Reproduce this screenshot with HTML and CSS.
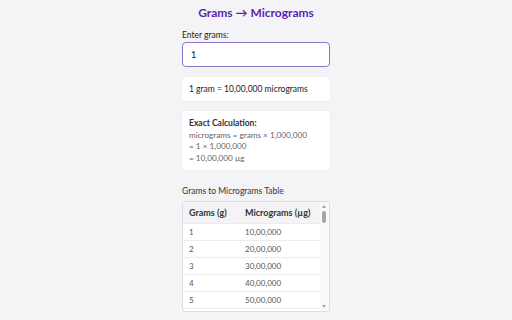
FILE: index.html
```html
<!DOCTYPE html>
<html lang="en">
<head>
<meta charset="utf-8">
<title>Grams to Micrograms</title>
<link rel="stylesheet" href="styles.css">
</head>
<body>
<main class="app">
  <h1 class="title">Grams → Micrograms</h1>
  <label class="label" for="grams">Enter grams:</label>
  <input id="grams" class="input" type="text" value="1">
  <div class="card result">1 gram = 10,00,000 micrograms</div>
  <div class="card calc">
    <div class="calc-head">Exact Calculation:</div>
    <div>micrograms = grams × 1,000,000</div>
    <div>= 1 × 1,000,000</div>
    <div>= 10,00,000 µg</div>
  </div>
  <div class="table-label">Grams to Micrograms Table</div>
  <div class="table-wrap">
    <table class="table">
      <thead><tr><th>Grams (g)</th><th>Micrograms (µg)</th></tr></thead>
      <tbody>
        <tr><td>1</td><td>10,00,000</td></tr>
        <tr><td>2</td><td>20,00,000</td></tr>
        <tr><td>3</td><td>30,00,000</td></tr>
        <tr><td>4</td><td>40,00,000</td></tr>
        <tr><td>5</td><td>50,00,000</td></tr>
      </tbody>
    </table>
    <div class="scrollbar" aria-hidden="true">
      <span class="arrow up"></span>
      <span class="thumb"></span>
      <span class="arrow down"></span>
    </div>
  </div>
</main>
</body>
</html>
```
FILE: styles.css
```css
html, body {
  margin: 0;
  padding: 0;
  background: #f4f4f6;
}
body {
  font-family: "Lato", "Open Sans", sans-serif;
  color: #222;
  font-size: 8.5px;
}
.app {
  width: 148px;
  margin: 0 auto;
  padding-top: 5px;
  display: flex;
  flex-direction: column;
}
.title {
  margin: 0;
  text-align: center;
  font-size: 12px;
  font-weight: 700;
  color: #5b1fb3;
  line-height: 16px;
}
.label {
  margin-top: 8px;
  line-height: 12px;
  color: #222;
}
.input {
  margin-top: 1px;
  height: 25px;
  box-sizing: border-box;
  border: 1px solid #8f74cc;
  border-radius: 4px;
  padding: 0 8px;
  font: inherit;
  font-size: 9px;
  color: #111;
  background: #fff;
  outline: none;
}
.card {
  background: #fff;
  border-radius: 4px;
  box-shadow: 0 0 2px rgba(0,0,0,0.08);
  padding: 0 7px;
}
.result {
  margin-top: 10px;
  height: 24px;
  display: flex;
  align-items: center;
}
.calc {
  margin-top: 10px;
  padding-top: 7px;
  padding-bottom: 6px;
  color: #666;
  line-height: 11.5px;
  font-size: 8.2px;
}
.calc-head {
  font-weight: 700;
  color: #333;
  font-size: 8.5px;
}
.table-label {
  margin-top: 15px;
  line-height: 12px;
  color: #333;
}
.table-wrap {
  position: relative;
  margin-top: 4px;
  height: 111px;
  box-sizing: border-box;
  border: 1px solid #dcdcdc;
  border-radius: 3px;
  background: #fff;
  overflow: hidden;
}
.table {
  width: calc(100% - 9px);
  border-collapse: collapse;
}
.table th, .table td {
  text-align: left;
  padding: 0 6px;
  height: 16px;
  border-bottom: 1px solid #ececec;
  white-space: nowrap;
}
.table th:first-child, .table td:first-child {
  width: 44px;
}
.table th {
  height: 21px;
  background: #f4f4f6;
  font-weight: 700;
  color: #333;
  font-size: 9px;
}
.table td {
  color: #555;
  font-size: 8px;
}
.scrollbar {
  position: absolute;
  top: 0;
  right: 0;
  bottom: 0;
  width: 9px;
  background: #fafafa;
}
.arrow {
  position: absolute;
  left: 2px;
  width: 0;
  height: 0;
  border-left: 2.5px solid transparent;
  border-right: 2.5px solid transparent;
}
.arrow.up {
  top: 3px;
  border-bottom: 3px solid #a3a3a3;
}
.arrow.down {
  bottom: 3px;
  border-top: 3px solid #a3a3a3;
}
.thumb {
  position: absolute;
  top: 9px;
  left: 2px;
  width: 4px;
  height: 12px;
  border-radius: 2px;
  background: #a6a6a6;
}
```
